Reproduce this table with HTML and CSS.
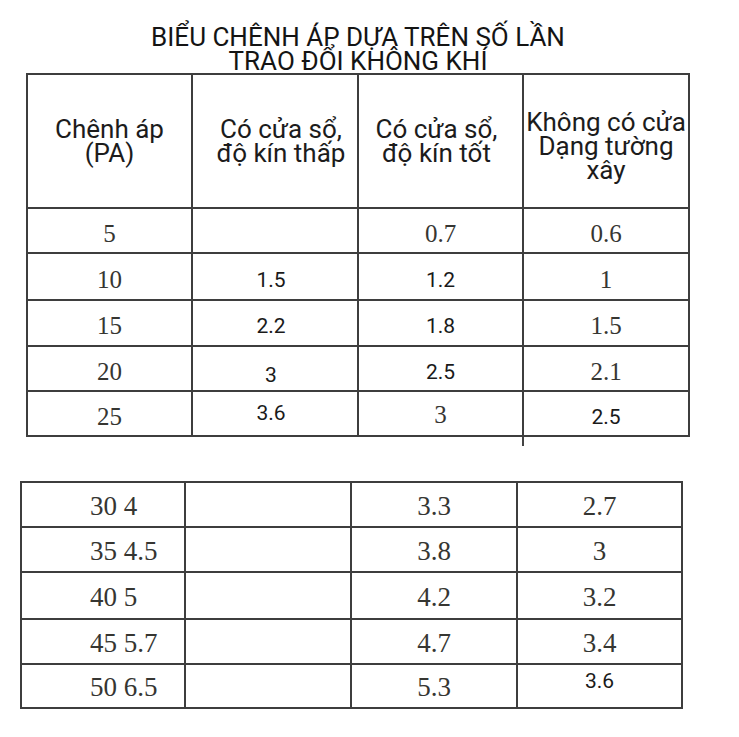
FILE: index.html
```html
<!DOCTYPE html>
<html lang="vi">
<head>
<meta charset="utf-8">
<title>Biểu chênh áp</title>
<link rel="stylesheet" href="styles.css">
</head>
<body>
<div class="page">
  <h1 class="title">BIỂU CHÊNH ÁP DỰA TRÊN SỐ LẦN<br>TRAO ĐỔI KHÔNG KHÍ</h1>
  <div class="grid grid-top">
    <div class="cell head">Chênh áp<br>(PA)</div>
    <div class="cell head h2">Có cửa sổ,<br>độ kín thấp</div>
    <div class="cell head h3">Có cửa sổ,<br>độ kín tốt</div>
    <div class="cell head h4">Không có cửa<br>Dạng tường<br>xây</div>

    <div class="cell s">5</div>
    <div class="cell n c2"></div>
    <div class="cell s">0.7</div>
    <div class="cell s">0.6</div>

    <div class="cell s">10</div>
    <div class="cell n c2">1.5</div>
    <div class="cell n">1.2</div>
    <div class="cell s">1</div>

    <div class="cell s">15</div>
    <div class="cell n c2">2.2</div>
    <div class="cell n">1.8</div>
    <div class="cell s">1.5</div>

    <div class="cell s">20</div>
    <div class="cell n c2 lo">3</div>
    <div class="cell n">2.5</div>
    <div class="cell s">2.1</div>

    <div class="cell s">25</div>
    <div class="cell n c2 hi">3.6</div>
    <div class="cell s mid">3</div>
    <div class="cell n">2.5</div>
  </div>

  <div class="grid grid-bottom">
    <div class="cell b s first">30 4</div>
    <div class="cell b"></div>
    <div class="cell b s">3.3</div>
    <div class="cell b s">2.7</div>

    <div class="cell b s first">35 4.5</div>
    <div class="cell b"></div>
    <div class="cell b s">3.8</div>
    <div class="cell b s">3</div>

    <div class="cell b s first">40 5</div>
    <div class="cell b"></div>
    <div class="cell b s">4.2</div>
    <div class="cell b s">3.2</div>

    <div class="cell b s first">45 5.7</div>
    <div class="cell b"></div>
    <div class="cell b s">4.7</div>
    <div class="cell b s">3.4</div>

    <div class="cell b s first">50 6.5</div>
    <div class="cell b"></div>
    <div class="cell b s">5.3</div>
    <div class="cell b n up">3.6</div>
  </div>
</div>
</body>
</html>
```

FILE: styles.css
```css
html, body {
  margin: 0;
  padding: 0;
  background: #ffffff;
}

.page {
  padding-top: 25px;
}

.title {
  margin: 0 0 0 26px;
  width: 664px;
  font-family: Roboto, "Noto Sans", sans-serif;
  font-weight: 400;
  font-size: 26px;
  line-height: 24px;
  color: #141414;
  text-align: center;
}

.grid {
  display: grid;
  gap: 2px;
  padding: 2px;
  background: #3e3e3e;
  width: fit-content;
}

.grid-top {
  position: relative;
  margin-left: 26px;
  grid-template-columns: 163px 164px 163px 164px;
  grid-template-rows: 132px 43px 45px 44px 43px 43px;
}

.grid-top::after {
  content: "";
  position: absolute;
  left: 496px;
  top: 100%;
  width: 2px;
  height: 9px;
  background: #444;
}

.grid-bottom {
  margin: 44px 0 0 20px;
  grid-template-columns: 162px 164px 164px 163px;
  grid-template-rows: 43px 43px 45px 43px 42px;
}

.cell {
  background: #ffffff;
  display: flex;
  align-items: center;
  justify-content: center;
  text-align: center;
  box-sizing: border-box;
}

.head {
  font-family: Roboto, "Noto Sans", sans-serif;
  font-size: 26px;
  line-height: 24px;
  color: #1c1c1c;
}

.h2 { padding-left: 12px; }
.h3 { padding-right: 8px; }
.h4 { padding-top: 10px; }

.s {
  font-family: "Liberation Serif", "DejaVu Serif", serif;
  font-size: 25px;
  color: #363632;
  padding-top: 6px;
}

.n {
  font-family: Roboto, "Noto Sans", sans-serif;
  font-size: 21px;
  color: #1a1a1a;
  padding-top: 6px;
}

.c2 { padding-right: 8px; }
.lo { padding-top: 12px; }
.hi { padding-top: 0; padding-bottom: 2px; }
.mid { padding-top: 2px; }

.b.s {
  font-size: 27px;
  padding-top: 3px;
}

.first {
  justify-content: flex-start;
  padding-left: 68px;
}

.up {
  padding-top: 0;
  padding-bottom: 10px;
}
```
